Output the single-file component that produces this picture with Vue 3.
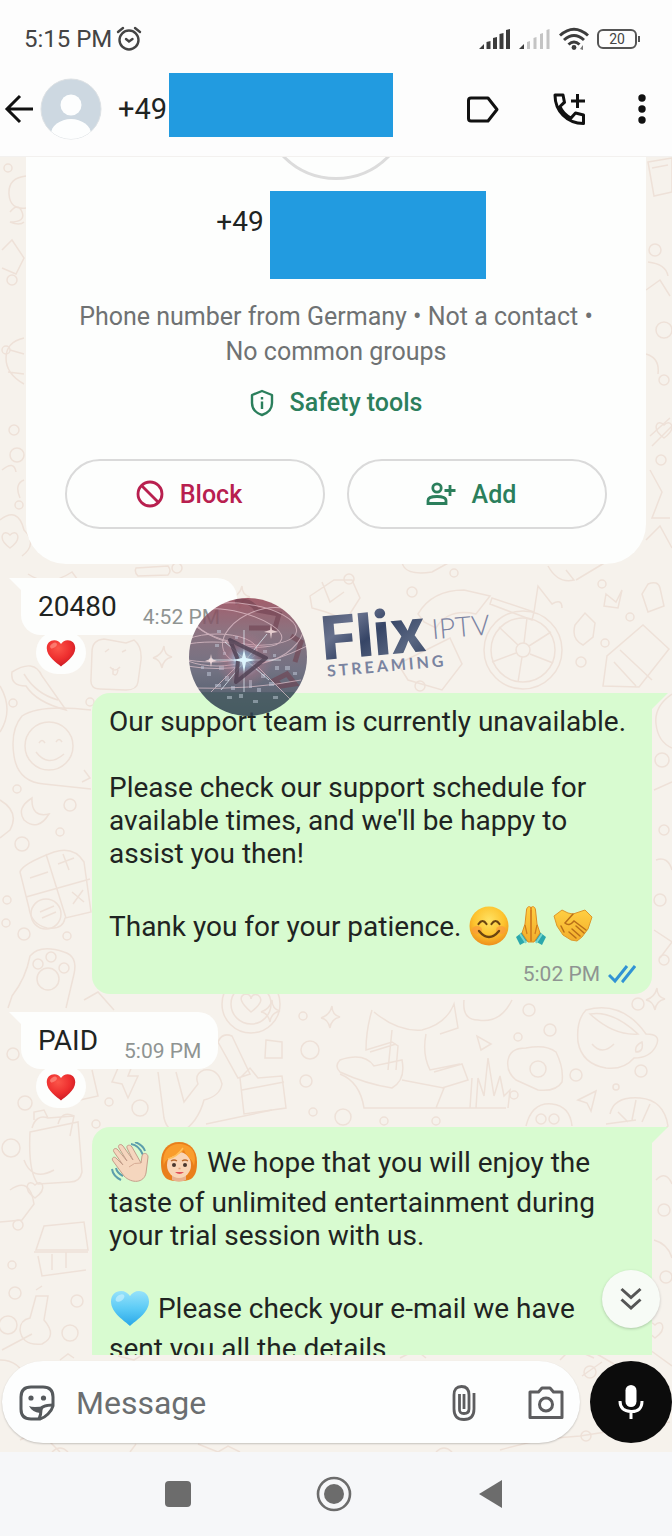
<script setup>
import { ref } from 'vue';

const draft = ref('');

const messages = [
  { id: 1, mine: false, text: '20480', time: '4:52 PM', reaction: true },
  {
    id: 2,
    mine: true,
    time: '5:02 PM',
    paragraphs: [
      ['Our support team is currently unavailable.'],
      ["Please check our support schedule for available times, and we'll be happy to assist you then!"],
      ['Thank you for your patience. ', { emoji: 'smile' }, { emoji: 'pray' }, { emoji: 'shake' }]
    ]
  },
  { id: 3, mine: false, text: 'PAID', time: '5:09 PM', reaction: true },
  {
    id: 4,
    mine: true,
    paragraphs: [
      [{ emoji: 'wave' }, ' ', { emoji: 'woman' }, ' We hope that you will enjoy the taste of unlimited entertainment during your trial session with us.'],
      [{ emoji: 'blueheart' }, ' Please check your e-mail we have sent you all the details']
    ]
  }
];

// small circles scattered over the wallpaper: x, y, radius
const dots = [
  [8, 168, 4], [12, 280, 5], [14, 430, 5], [17, 455, 7], [19, 505, 4], [6, 350, 4],
  [655, 250, 6], [661, 460, 5], [664, 330, 8], [664, 380, 5],
  [103, 587, 5], [177, 568, 5], [349, 579, 5], [412, 592, 5], [454, 573, 4], [602, 584, 4],
  [630, 617, 4], [605, 643, 4], [581, 662, 5], [420, 686, 5], [13, 703, 4], [156, 700, 4], [90, 702, 4],
  [17, 789, 4], [70, 805, 6], [60, 832, 4], [22, 844, 7], [7, 900, 4], [6, 923, 4], [24, 934, 6], [67, 936, 4],
  [662, 760, 7], [664, 830, 5], [660, 900, 6], [664, 960, 5],
  [13, 1054, 6], [25, 1103, 7], [11, 1148, 9], [96, 1124, 4], [109, 1102, 4], [140, 1108, 8], [306, 1081, 6],
  [303, 1016, 4], [310, 1050, 9], [313, 1112, 4], [529, 1010, 6], [550, 1030, 6], [518, 1037, 4], [576, 1075, 6],
  [641, 1071, 6], [616, 1087, 3], [514, 1095, 4], [343, 1117, 8], [384, 1121, 4], [436, 1121, 4], [638, 1004, 6],
  [12, 1265, 4], [15, 1293, 6], [77, 1301, 6], [70, 1333, 8], [8, 1325, 9], [666, 1277, 6], [18, 1225, 5],
  [664, 1210, 6], [590, 1372, 6], [586, 1436, 5]
];

const hearts = [[655, 1330], [35, 1190], [664, 430], [10, 540]];
const stars = [[162, 658], [240, 598], [330, 1018], [20, 1385], [655, 1000], [270, 1012]];
</script>

<template>
  <div class="screen">
    <!-- shared emoji drawings -->
    <svg class="sprite" aria-hidden="true">
      <defs>
        <radialGradient id="gYellow" cx="0.5" cy="0.35" r="0.65">
          <stop offset="0" stop-color="#ffe264" />
          <stop offset="0.6" stop-color="#fdc32d" />
          <stop offset="1" stop-color="#ee8f1c" />
        </radialGradient>
        <linearGradient id="gHand" x1="0" y1="0" x2="0" y2="1">
          <stop offset="0" stop-color="#ffcf42" />
          <stop offset="1" stop-color="#f3ae2b" />
        </linearGradient>
        <radialGradient id="gRed" cx="0.4" cy="0.3" r="0.7">
          <stop offset="0" stop-color="#fb5549" />
          <stop offset="0.6" stop-color="#ee2f2f" />
          <stop offset="1" stop-color="#cb1c25" />
        </radialGradient>
        <linearGradient id="gBlue" x1="0" y1="0" x2="0" y2="1">
          <stop offset="0" stop-color="#97e2fa" />
          <stop offset="0.5" stop-color="#5ccbf6" />
          <stop offset="1" stop-color="#29a7e8" />
        </linearGradient>
        <symbol id="heart" viewBox="0 0 40 40">
          <path d="M20 38C15 33 1 25 1 13.500C1 7 5.500 3 11 3c4 0 7 2 9 5 2-3 5-5 9-5 5.500 0 10 4 10 10.500C39 25 25 33 20 38z" />
        </symbol>
        <symbol id="smile" viewBox="0 0 40 40">
          <circle cx="20" cy="20" r="19.500" fill="url(#gYellow)" />
          <ellipse cx="8" cy="24" rx="5" ry="4" fill="#fb9a3c" opacity="0.7" />
          <ellipse cx="32" cy="24" rx="5" ry="4" fill="#fb9a3c" opacity="0.7" />
          <path d="M9.500 18q4-6 8 0M22.500 18q4-6 8 0" fill="none" stroke="#6b4410" stroke-width="2.200" stroke-linecap="round" />
          <path d="M10 25q10 12 20 0" fill="none" stroke="#6b4410" stroke-width="2.400" stroke-linecap="round" />
        </symbol>
        <symbol id="pray" viewBox="0 0 40 40">
          <path d="M14 24L5 31l4 8 9-5zM26 24l9 7-4 8-9-5z" fill="#2ba8ac" />
          <path d="M9 28l6 9M31 28l-6 9" stroke="#78d6cf" stroke-width="2" />
          <path d="M19.500 1c-2-1-3.500 0-4 3L14 18l-3 9 6 9h3zM20.500 1c2-1 3.500 0 4 3L26 18l3 9-6 9h-3z" fill="url(#gHand)" stroke="#df8d22" stroke-width="1" />
          <path d="M20 4v31M14 19l2 9M26 19l-2 9" stroke="#cf7b1b" stroke-width="1.200" fill="none" />
        </symbol>
        <symbol id="shake" viewBox="0 0 40 40">
          <path d="M1 10L9 4l6 3 5 1 6-2 6-2 7 7-4 12-6 8-5 4-6-1-8-5-6-9z" fill="url(#gHand)" stroke="#dd982b" stroke-width="1" stroke-linejoin="round" />
          <path d="M20 8l-8 9q4 4 9-2l12 9M23 20l8 7M19 23l8 7M16 26l7 6M8 20l3 6" fill="none" stroke="#b96f18" stroke-width="1.500" stroke-linecap="round" />
        </symbol>
        <symbol id="wave" viewBox="0 0 40 40">
          <path d="M21 2q8 1 12 11M25 0q8 3 10 9M2 27q1 7 9 11M6 26q1 5 7 8" fill="none" stroke="#5d9eac" stroke-width="2" />
          <path d="M14 34L3 19c-2-3 1-5 3-3l7 7L4 10c-2-3 2-5 4-2l9 11L9 6c-2-3 2-5 4-2l10 14-6-12c-1-3 3-4 5-1l9 16 1-7c1-4 6-3 6 1l-2 16c-2 10-14 11-22 3z" fill="#f5d6be" stroke="#c59e8b" stroke-width="1" />
          <path d="M19 25q5-5 12-4" fill="none" stroke="#d7ac95" />
        </symbol>
        <symbol id="woman" viewBox="0 0 40 40">
          <path d="M20 0C9 0 2 8 2 20c0 8 1 13 6 17 6 3 18 3 24 0 5-4 6-9 6-17C38 8 31 0 20 0z" fill="#e97f1b" />
          <path d="M13 30h14v8q-7 3-14 0z" fill="#e9b18f" />
          <ellipse cx="20" cy="23" rx="12" ry="13" fill="#f9d5b6" />
          <path d="M5 24C6 14 17 16 25 8c2 7 8 8 10 16 4-16-5-22-15-22S2 10 5 24z" fill="#f99d2c" />
          <path d="M9 17Q18 15 24 6" fill="none" stroke="#ffc15b" stroke-width="1.500" />
          <circle cx="15" cy="23" r="2" fill="#49372f" />
          <circle cx="26" cy="23" r="2" fill="#49372f" />
          <path d="M12 19q3-2 6 0M23 19q3-2 6 0" fill="none" stroke="#b86930" stroke-width="1.300" />
          <path d="M16 30q4.500 4 9 0z" fill="#e2525a" />
          <path d="M19.500 26.500h2" stroke="#dda27a" stroke-width="1.500" />
        </symbol>
        <symbol id="blueheart" viewBox="0 0 40 40">
          <use href="#heart" fill="url(#gBlue)" />
          <ellipse cx="10" cy="10" rx="5" ry="3" fill="#d0f4ff" opacity="0.6" transform="rotate(-35 10 10)" />
        </symbol>
        <symbol id="redheart" viewBox="0 0 40 40">
          <use href="#heart" fill="url(#gRed)" />
          <ellipse cx="10" cy="10" rx="5" ry="3" fill="#ff9c90" opacity="0.6" transform="rotate(-35 10 10)" />
        </symbol>
      </defs>
    </svg>

    <header class="top">
      <div class="status">
        <span class="clock">5:15 PM</span>
        <svg class="alarm" width="26" height="26" viewBox="0 0 26 26" fill="none" stroke="#444" stroke-width="2.400" stroke-linecap="round">
          <circle cx="13" cy="14" r="9.500" />
          <path d="M10 13l3 2.500 3.500-2.500M2 6l5-4M24 6l-5-4" />
        </svg>
        <div class="status-icons">
          <svg width="32" height="22" viewBox="0 0 32 22" fill="#3c3c3c">
            <path d="M0 21l5-5v5zM7.500 14l4-1v8h-4zM14 10l4-1v12h-4zM20.500 6l4-1v16h-4zM27 2l4-1v20h-4z" />
          </svg>
          <svg width="32" height="22" viewBox="0 0 32 22" fill="#c4c4c4">
            <path d="M0 21l5-5v5z" fill="#3c3c3c" />
            <path d="M8 14l3-1v8H8zM14.500 10l3-1v12h-3zM21 6l3-1v16h-3zM27.500 2l3-1v20h-3z" />
          </svg>
          <svg width="30" height="24" viewBox="0 0 30 24" fill="none" stroke="#3c3c3c" stroke-width="3">
            <path d="M1 8.500Q15-4 29 8.500M5 13q10-9 20 0M9.500 17.500q5.500-5 11 0" />
            <circle cx="15" cy="20.500" r="2.400" fill="#3c3c3c" stroke="none" />
            <path d="M21 22l3-4v5z" fill="#777" stroke="none" />
          </svg>
          <div class="battery">20</div>
        </div>
      </div>

      <div class="app-bar">
        <button class="icon-btn back" aria-label="Back">
          <svg width="30" height="30" viewBox="0 0 30 30" fill="none" stroke="#111" stroke-width="3">
            <path d="M29 15H3M16 2L3 15l13 13" />
          </svg>
        </button>
        <svg class="avatar" width="62" height="62" viewBox="0 0 62 62">
          <clipPath id="avatarClip"><circle cx="31" cy="31" r="30" /></clipPath>
          <circle cx="31" cy="31" r="30" fill="#cdd8e1" stroke="#dde1e4" />
          <g clip-path="url(#avatarClip)" fill="#fdfefe">
            <circle cx="31" cy="27" r="10.500" />
            <ellipse cx="31" cy="56" rx="20" ry="15" />
          </g>
        </svg>
        <h1 class="name">+49</h1>
        <div class="redacted"></div>
        <div class="actions">
          <button class="icon-btn" aria-label="Label chat">
            <svg width="34" height="34" viewBox="0 0 34 34" fill="none" stroke="#111" stroke-width="3" stroke-linejoin="round">
              <path d="M5 6h17L31 17.500 22 29H5q-2.500 0-2.500-2.500v-18Q2.500 6 5 6z" />
            </svg>
          </button>
          <button class="icon-btn" aria-label="Call">
            <svg width="34" height="34" viewBox="0 0 34 34" fill="none" stroke="#111" stroke-width="3" stroke-linejoin="round">
              <path d="M3 3h8l1.500 7.500-4.500 4Q11 22 19 26l4.500-5 8 2v8.500C15 31.500 3 19 3 3zM12 10.500L8 14.500M19 26l4.500-5" />
              <path d="M25.500 2v14M19 9h14" />
            </svg>
          </button>
          <button class="icon-btn more" aria-label="More options">
            <svg width="10" height="30" viewBox="0 0 10 30" fill="#111">
              <circle cx="5" cy="4" r="3.700" /><circle cx="5" cy="15" r="3.700" /><circle cx="5" cy="26" r="3.700" />
            </svg>
          </button>
        </div>
      </div>
    </header>

    <main class="chat">
      <svg class="wallpaper" viewBox="0 157 672 1295" preserveAspectRatio="xMidYMin slice" fill="none" stroke="#eee1d8" stroke-width="1.500" aria-hidden="true">
        <circle v-for="(d, i) in dots" :key="'d' + i" :cx="d[0]" :cy="d[1]" :r="d[2]" />
        <path v-for="(h, i) in hearts" :key="'h' + i" :transform="`translate(${h[0]} ${h[1]})`" d="M0 8C-14-2-6-12 0-5 6-12 14-2 0 8z" />
        <path v-for="(s, i) in stars" :key="'s' + i" :transform="`translate(${s[0]} ${s[1]})`" d="M2-12q0 9 8 11-9 2-10 11-2-9-9-10 9-3 11-12z" />
        <!-- left edge beside the card -->
        <path d="M26 176q-18 2-17 18t17 14M10 212q8-10 12 0t-12 10q10 4 14 0M2 250l10-10 12 18-8 16-14-6M24 338q-18 4-18 20t18 26M10 350l14 4M8 372l16 2M2 470q12-10 14 2M0 520q18-14 24 10 14 14-2 26M24 480q-10 4-4 18" />
        <!-- right edge beside the card -->
        <path d="M648 162l24-4v34l-18 4zM652 168l16-3M648 262q18 2 20 14M646 290l14-10 10 16M650 436l20-18M652 446l20-20M646 354q14 4 12 20M650 470l12 22-10 26h18M646 540l14-14 12 22" />
        <!-- row above the first outgoing bubble -->
        <path d="M136 568l32-2q4 5 0 9l-30 1q-4-4-2-8zM28 574q20 14 44-2 16 20 8 28M92 652q0-12 12-13l22 4 8-3q8 6 7 20l-3 22q-1 8-12 8l-26-1q-10 0-9-10zM105 652l4-3M122 652l4-2M110 667q5 6 10 0M113 668v6q4 3 5-4M12 672q22-14 30 4l24 34q-30-8-40-24-16 0-14-14zM24 674q12 20 34 26M0 686q14 24 0 46" />
        <path d="M310 596l24-16h18l8 18-14 22-20-8-14-4zM322 582l8 20 14-10M402 562q2 14 30 10l18-10M418 614q14-24 46-24l26 6-14 18q-28-6-40 14l-12-6zM492 598l42 14-2 8-42-16zM534 612l4-26 14 18q10-6 10 4M548 566q10 18 26 14l-8-10M576 580l30-18M606 594l10 8 6-12-4 18-14-2zM648 584q10-4 12 4l4 18-16 6-6-18z" />
        <circle cx="523" cy="650" r="39" /><circle cx="523" cy="650" r="32" /><circle cx="523" cy="650" r="7" />
        <path d="M518 645l-19-18M529 646l22-14M516 653l-24 9M530 654l23 9M522 657l-4 25M524 643l3-25M575 625l10-12 10 10-2 14-10 8q-12-6-8-20zM603 686l4-30 36-31 26 24-30 38zM614 662l22 24M620 650l32 30M398 664l52-26 12 26-20 26-34-10z" />
        <!-- left column beside the first outgoing bubble -->
        <path d="M91 710Q40 704 22 716 10 730 14 756q4 26 30 28l47 5" />
        <circle cx="49" cy="746" r="24" />
        <path d="M39 743q3-5 6 0M56 742q3-5 6 0M36 752q12 16 28 2M84 770l6 8-8 4M32 798q-16 10-8 22 14 12 25-6-18 4-17-16zM0 800q20 12 10 30L0 838" />
        <path d="M20 872q2-8 34-20 20-6 30 10l7 50-26 6q-2 12-18 10-16-4-18-20zM46 854l20 64M26 897l64-18M30 878l18-6M58 864l16-6M63 854l6 16M72 892l12 10M83 890l-10 14" />
        <circle cx="46" cy="914" r="15" />
        <path d="M40 912l14-6M42 918l14-6M8 1008l4-12q14-18 18-40 10-12 34-4 14 4 10 22l-8 34M84 1000l14-8 16 18" />
        <circle cx="38" cy="964" r="5" /><circle cx="51" cy="957" r="5" /><circle cx="64" cy="968" r="5" /><circle cx="48" cy="979" r="11" />
        <!-- right column -->
        <path d="M672 694q-18 12-16 30t16 24M654 790l18-8M656 860q12-4 16 10M654 930l18 12-12 16M656 1180q10-10 16 4M654 1240q14 4 18 18" />
        <!-- band between the two outgoing bubbles -->
        <circle cx="251" cy="1004" r="29" /><circle cx="251" cy="1004" r="20" />
        <path d="M251 1012q-16-14-6-18 6 0 6 5 1-6 7-4 8 6-7 17zM266 1040l16 2v16h-17zM218 1042q4-10 14-6l18 38-12 4zM240 1078l10-10 8 10 24-2 4 32-42 6zM242 1090l42-8M158 1072l6 46q4 16 18 14 16-10 22-32 16-4 18-16-4-16-18-14-10 4-6 14l-14 18-8-30M118 1068l-6 14 10 2 6 14 10-22h-10l4-10" />
        <path d="M92 1070l6 26-18 4M206 1124l66-14M372 1010q-6 20-6 40l26-8 6 4-2 24M370 1052l26-8M374 1012q24 20 48 18 24-6 32-26l4 24-18 6M392 1030l-4 40M426 1034q-4 20 4 36l30-6M434 1072l28-8 6 16-26 8M340 1060q24-8 34 6l28-6q4 20-10 28-26-4-52-16-6-6 0-12zM340 1074q20 8 24 34h142M402 1080l42 8-8 20M470 1108l2-30M476 1108l2-30 6 18 4-38 6 38 6-20 4 20 6-6-2 18" />
        <path d="M464 1000q-2 20 14 20 22 4 34-20M508 1060q2-12 18-12 20-4 30 4 8 16 6 30-6 10-24 8l-22-10q-10-8-8-20z" /><circle cx="538" cy="1069" r="8" />
        <path d="M586 1010q36-10 60 24 16 0 10 12-6 12-22 12-10 12-28 10-24-4-28-26-2-22 8-32zM590 1014q22-4 48 20-24 2-48-20zM592 1044q10 12 22 0M642 1042q-8 4-6 10 8 0 6-10zM477 1036l4 14 10-6zM578 1100l18-9-5 20-4-8z" />
        <path d="M526 1126q6-24 26-22 18 2 20 22M610 1114q4-18 30-16 24 2 28 28l-12 10M606 1124l30-4M618 1112l10 10M636 1100l-4 20M650 1104l-8 18" />
        <circle cx="541" cy="1119" r="5" /><circle cx="554" cy="1119" r="5" />
        <!-- left column beside the second outgoing bubble -->
        <path d="M30 1132l48-10 4 50q-2 10-12 10l-32 2q-10-12-8-52zM32 1128q4-14 16-10l26-2M34 1120v-8l10-2 4 8M58 1124q4-14 16-8l-4 20M24 1160q8 22 30 10M10 1190q20-14 24 14l-12 16-22 2" />
        <path d="M36 1250l8-24 40-4 4 28zM34 1252h54M38 1256l4 20 44-6M52 1254v16M66 1252v16M36 1290l6-4" />
        <path d="M36 1296h12l-4 24q14 16-2 24-20 2-22-14 0-10 10-12zM2 1350l30-16M0 1360q20 0 26 20l-12 20" />
        <!-- strip around the composer -->
        <path d="M60 1360l8-6 6 4M118 1356l16 4 10-6M400 1358l16-8 10 8M560 1360l12-12 22 10M582 1376l20-14M500 1450q40-12 80-14l90-14M590 1350l24 14M650 1350l22 16M20 1440l18-10 22 22M52 1452q8-8 16 0M130 1452l6-8M198 1444l20 8 10-6 12 6M436 1452q8-8 16 0" />
      </svg>

      <div class="messages">
        <section class="card">
          <div class="photo"></div>
          <div class="card-number">
            <h2>+49</h2>
            <div class="redacted tall"></div>
          </div>
          <p class="info">Phone number from Germany • Not a contact • No common groups</p>
          <button class="safety">
            <svg width="24" height="28" viewBox="0 0 24 28" fill="none" stroke="currentColor" stroke-width="2.400" stroke-linejoin="round">
              <path d="M12 2l10 4v8c0 6-4 10-10 12C6 24 2 20 2 14V6z" />
              <path d="M12 12.500V20M12 8v2.500" />
            </svg>
            Safety tools
          </button>
          <div class="card-actions">
            <button class="pill block">
              <svg width="28" height="28" viewBox="0 0 28 28" fill="none" stroke="currentColor" stroke-width="2.800">
                <circle cx="14" cy="14" r="12" /><path d="M5.500 5.500l17 17" />
              </svg>
              Block
            </button>
            <button class="pill add">
              <svg width="30" height="24" viewBox="0 0 30 24" fill="none" stroke="currentColor" stroke-width="2.800">
                <circle cx="11" cy="6" r="4.200" />
                <path d="M2 21.500v-3q0-4 9-4t9 4v3zM24 3v11M18.500 8.500h11" />
              </svg>
              Add
            </button>
          </div>
        </section>

        <template v-for="m in messages" :key="m.id">
          <article v-if="m.mine" class="bubble out">
            <p v-for="(p, i) in m.paragraphs" :key="i">
              <template v-for="(part, j) in p" :key="j">
                <svg v-if="part.emoji" class="emoji" width="40" height="40"><use :href="'#' + part.emoji" /></svg>
                <template v-else>{{ part }}</template>
              </template>
            </p>
            <div v-if="m.time" class="meta">
              <time>{{ m.time }}</time>
              <svg width="28" height="20" viewBox="0 0 28 20" fill="none" stroke="#3193d4" stroke-width="3">
                <path d="M1 11l6 6L19 2M14 16l1 1L27 2" />
              </svg>
            </div>
          </article>
          <article v-else class="bubble in">
            <span>{{ m.text }}</span>
            <time>{{ m.time }}</time>
            <div v-if="m.reaction" class="reaction">
              <svg width="32" height="30"><use href="#redheart" /></svg>
            </div>
          </article>
        </template>

        <svg class="watermark" width="340" height="124" viewBox="0 0 340 124">
          <defs>
            <linearGradient id="gBall" x1="0" y1="0" x2="0" y2="1">
              <stop offset="0" stop-color="#974656" />
              <stop offset="0.3" stop-color="#7c6070" />
              <stop offset="0.6" stop-color="#5f5f73" />
              <stop offset="1" stop-color="#314254" />
            </linearGradient>
            <radialGradient id="gGlow">
              <stop offset="0" stop-color="#e9fbff" />
              <stop offset="0.25" stop-color="#8fc3ea" stop-opacity="0.8" />
              <stop offset="0.6" stop-color="#c0637a" stop-opacity="0.3" />
              <stop offset="1" stop-color="#c0637a" stop-opacity="0" />
            </radialGradient>
            <linearGradient id="gFlix" x1="0" y1="0" x2="1" y2="1">
              <stop offset="0" stop-color="#46516c" />
              <stop offset="0.3" stop-color="#66708c" />
              <stop offset="0.5" stop-color="#364566" />
              <stop offset="0.75" stop-color="#596681" />
              <stop offset="1" stop-color="#2f4062" />
            </linearGradient>
            <clipPath id="ballClip"><circle cx="61" cy="61" r="59" /></clipPath>
          </defs>
          <g clip-path="url(#ballClip)" opacity="0.87">
            <rect width="122" height="122" fill="url(#gBall)" />
            <path d="M0 96h122v26H0z" fill="#304350" opacity="0.7" />
            <g fill="none" stroke="#5b2638" stroke-width="5" opacity="0.6">
              <path d="M48 6q14-4 22 8l22 4-4 14H62M104 40l10 6-6 20M88 84l12-6 8 10-14 2z" />
            </g>
            <g fill="none" stroke="#ecc8d3" stroke-width="1" opacity="0.65">
              <ellipse cx="58" cy="28" rx="52" ry="20" transform="rotate(8 58 28)" />
              <ellipse cx="50" cy="32" rx="46" ry="16" transform="rotate(14 50 32)" />
              <ellipse cx="30" cy="54" rx="40" ry="16" />
              <ellipse cx="25" cy="56" rx="40" ry="10" />
              <ellipse cx="76" cy="40" rx="42" ry="26" transform="rotate(-20 76 40)" />
              <path d="M0 70q60 10 120-20M24 96L60 60l50 50M4 92q60 2 110-8" />
            </g>
            <g fill="#bdc6d9" opacity="0.5">
              <path d="M22 62h4v4h-4zM32 70h5v4h-5zM20 76h4v4h-4zM38 80h4v5h-4zM28 88h6v3h-6zM74 78h4v4h-4zM82 86h5v4h-5zM70 92h4v4h-4zM98 70h5v4h-5zM86 58h3v3h-3zM44 90h4v4h-4zM62 84h3v8h-3zM14 70h3v3h-3zM106 76h4v3h-4zM40 100h5v3h-5zM66 104h5v3h-5zM86 100h5v3h-5zM28 48h4v3h-4zM36 56h3v3h-3zM88 70h4v4h-4zM48 40h3v3h-3zM30 34h4v3h-4zM76 54h4v3h-4zM52 98h4v4h-4z" />
            </g>
            <circle cx="57" cy="64" r="29" fill="url(#gGlow)" />
            <path d="M57 34v62M22 64h72M38 46l44 38M80 38L34 94" stroke="#e5f6ff" stroke-width="1" opacity="0.7" />
            <path d="M43 44l36 18-30 24 2-22z" fill="#43324a" fill-opacity="0.4" stroke="#39283e" stroke-width="4" stroke-linejoin="round" opacity="0.85" />
            <path d="M57 54l2 8 9 2-9 2-2 10-2-10-9-2 9-2z" fill="#d9f5ff" />
            <path d="M84 28l1 6 6 2-6 1-1 6-1-6-6-1 6-2zM24 58l1 5 5 2-5 1-1 5-1-5-5-1 5-2z" fill="#ffe3e4" opacity="0.8" />
          </g>
          <g transform="rotate(-5 136 64)">
            <text class="flix" x="136" y="64" fill="url(#gFlix)">Flix</text>
            <text class="iptv" x="247" y="53">IPTV</text>
            <text class="streaming" x="139" y="81">STREAMING</text>
          </g>
        </svg>
      </div>

      <button class="jump" aria-label="Scroll to latest">
        <svg width="22" height="24" viewBox="0 0 22 24" fill="none" stroke="#555" stroke-width="3">
          <path d="M1.500 2l9.500 8.500L20.500 2M1.500 12.500L11 21l9.500-8.500" />
        </svg>
      </button>

      <form class="composer" @submit.prevent>
        <div class="field">
          <button type="button" class="icon-btn" aria-label="Stickers">
            <svg width="36" height="36" viewBox="0 0 36 36" fill="none" stroke="#55595c" stroke-width="3" stroke-linejoin="round">
              <path d="M12 2h12q10 0 10 10v9q-1 4-5 8t-8 5h-9Q2 34 2 24V12Q2 2 12 2z" />
              <path d="M34 20q-12 0-12 5 0 5-2 9" />
              <path d="M10 21q4 2 16 0-4 3-5 7-8-1-11-7z" fill="#55595c" stroke="none" />
              <circle cx="12" cy="13" r="2.600" fill="#55595c" stroke="none" /><circle cx="24.500" cy="13" r="2.600" fill="#55595c" stroke="none" />
            </svg>
          </button>
          <input v-model="draft" type="text" placeholder="Message" aria-label="Message" />
          <button type="button" class="icon-btn" aria-label="Attach">
            <svg width="24" height="36" viewBox="0 0 24 36" fill="none" stroke="#5d5d5f" stroke-width="2.800">
              <path d="M22 8v16q0 10.500-10 10.500T2 24V10q0-8.500 7.500-8.500T17 10v14q0 4.500-5 4.500T7.500 24V9M12 9v15" />
            </svg>
          </button>
          <button type="button" class="icon-btn" aria-label="Camera">
            <svg width="36" height="34" viewBox="0 0 36 34" fill="none" stroke="#5d5d5f" stroke-width="3" stroke-linejoin="round">
              <path d="M2 6h8.500L14 2h8l3.500 4H34v25.500H2z" /><circle cx="18" cy="18.500" r="6.500" />
            </svg>
          </button>
        </div>
        <button type="button" class="mic" aria-label="Record voice message">
          <svg width="26" height="36" viewBox="0 0 26 36" fill="none" stroke="#fff" stroke-width="3">
            <rect x="7.500" y="1" width="11" height="22" rx="5.500" fill="#fff" stroke="none" />
            <path d="M2 17q0 10 11 10.500T24 17M13 27v8" />
          </svg>
        </button>
      </form>
    </main>

    <nav class="nav">
      <button aria-label="Recent apps">
        <svg width="36" height="36" viewBox="0 0 36 36"><rect x="5" y="5" width="26" height="26" rx="4" fill="#6c6c6c" /></svg>
      </button>
      <button aria-label="Home">
        <svg width="36" height="36" viewBox="0 0 36 36"><circle cx="18" cy="18" r="16" fill="none" stroke="#6c6c6c" stroke-width="2.600" /><circle cx="18" cy="18" r="10" fill="#6c6c6c" /></svg>
      </button>
      <button aria-label="Back to previous app">
        <svg width="36" height="36" viewBox="0 0 36 36"><path d="M30 4v28L7 18z" fill="#6c6c6c" /></svg>
      </button>
    </nav>
  </div>
</template>

<style>
body {
  margin: 0;
}
</style>

<style scoped>
.screen {
  display: flex;
  flex-direction: column;
  height: 100vh;
  overflow: hidden;
  background: #fdfdfd;
  color: #1f2422;
  font-family: Roboto, "Liberation Sans", sans-serif;
}

.sprite {
  position: absolute;
  width: 0;
  height: 0;
}

svg {
  display: block;
  flex: none;
}

button {
  display: flex;
  align-items: center;
  justify-content: center;
  padding: 0;
  border: 0;
  background: none;
  font-family: inherit;
  cursor: pointer;
}

h1,
h2,
p {
  margin: 0;
  font-weight: 400;
}

.top {
  flex: none;
  border-bottom: 1px solid #f3f1ef;
}

.status {
  display: flex;
  align-items: center;
  height: 72px;
  padding: 6px 35px 0 24px;
  box-sizing: border-box;
}

.clock {
  font-size: 24px;
  line-height: 32px;
  color: #444;
}

.alarm {
  margin-left: 4px;
}

.status-icons {
  display: flex;
  align-items: center;
  gap: 8px;
  margin-left: auto;
}

.battery {
  position: relative;
  width: 36px;
  height: 16px;
  border: 2px solid #555;
  border-radius: 6px;
  font-size: 14px;
  line-height: 16px;
  text-align: center;
  color: #444;
}

.battery::after {
  content: '';
  position: absolute;
  right: -5px;
  top: 5px;
  width: 2px;
  height: 6px;
  background: #555;
}

.app-bar {
  display: flex;
  align-items: center;
  height: 84px;
  padding: 0 20px 10px 4px;
  box-sizing: border-box;
}

.avatar {
  margin: 0 16px 0 6px;
}

.name {
  font-size: 29px;
  line-height: 36px;
  margin-right: 2px;
}

.redacted {
  flex: 0 1 224px;
  height: 64px;
  margin-bottom: 8px;
  background: #229be0;
}

.redacted.tall {
  flex-basis: 216px;
  height: 88px;
  margin: 0;
}

.actions {
  display: flex;
  align-items: center;
  gap: 52px;
  margin-left: auto;
}

.more {
  width: 20px;
  margin-left: -6px;
}

.chat {
  position: relative;
  flex: 1;
  min-height: 0;
  display: flex;
  flex-direction: column;
  background: #f6f2ec;
}

.wallpaper {
  position: absolute;
  inset: 0;
  width: 100%;
  height: 100%;
}

.messages {
  position: relative;
  flex: 1;
  min-height: 0;
  display: flex;
  flex-direction: column;
  overflow: hidden;
}

.card {
  flex: none;
  display: flex;
  flex-direction: column;
  align-items: center;
  margin: 0 26px 14px;
  padding: 0 39px 35px;
  border-radius: 0 0 40px 40px;
  background: #fdfefd;
}

.photo {
  width: 150px;
  height: 150px;
  margin-top: -127px;
  box-sizing: border-box;
  border: 3px solid #dcdcdc;
  border-radius: 50%;
}

.card-number {
  display: flex;
  gap: 6px;
  align-self: stretch;
  justify-content: center;
  margin-top: 11px;
  padding-left: 30px;
}

.card-number h2 {
  font-size: 28px;
  line-height: 62px;
}

.info {
  margin-top: 20px;
  font-size: 25px;
  line-height: 35px;
  text-align: center;
  color: #6f7273;
}

.safety {
  gap: 16px;
  margin-top: 16px;
  font-size: 25px;
  line-height: 36px;
  font-weight: 500;
  color: #2b7f5c;
}

.card-actions {
  display: flex;
  gap: 22px;
  align-self: stretch;
  margin-top: 38px;
}

.pill {
  flex: 1;
  gap: 16px;
  height: 70px;
  padding-right: 12px;
  border: 2px solid #dadada;
  border-radius: 35px;
  font-size: 25px;
  font-weight: 500;
}

.block {
  color: #b8204f;
}

.add {
  color: #2b7f5c;
}

.bubble {
  position: relative;
  flex: none;
  font-size: 28px;
  line-height: 33px;
}

.bubble::before {
  content: '';
  position: absolute;
  top: 0;
  width: 16px;
  height: 16px;
}

.in {
  align-self: flex-start;
  display: flex;
  align-items: flex-end;
  gap: 26px;
  margin: 0 0 58px 21px;
  padding: 12px 17px 4px;
  border-radius: 0 20px 20px 20px;
  background: #fdfefd;
}

.in span {
  padding-bottom: 8px;
}

.in::before {
  left: -12px;
  background: #fdfefd;
  clip-path: polygon(0 0, 100% 0, 100% 100%);
}

.out {
  margin: 0 20px 18px 92px;
  padding: 12px 22px 6px 17px;
  border-radius: 18px 0 18px 18px;
  background: #d8fbd0;
}

.out::before {
  right: -16px;
  background: #d8fbd0;
  clip-path: polygon(0 0, 100% 0, 0 100%);
}

.out p + p {
  margin-top: 33px;
}

.emoji {
  display: inline-block;
  margin: 3px 1px 4px;
  vertical-align: -14px;
}

.bubble time {
  font-size: 21px;
  line-height: 28px;
  color: #8f9492;
}

.meta {
  display: flex;
  align-items: center;
  justify-content: flex-end;
  gap: 8px;
  margin: 10px -6px 0 0;
}

.reaction {
  position: absolute;
  left: 15px;
  top: 53px;
  display: flex;
  align-items: center;
  justify-content: center;
  width: 50px;
  height: 43px;
  border-radius: 22px;
  background: #fdfefd;
}

.watermark {
  position: absolute;
  left: 187px;
  top: 439px;
}

.flix {
  font-family: Inter, "Open Sans", sans-serif;
  font-size: 60px;
  font-weight: 800;
}

.iptv {
  font-family: Lato, sans-serif;
  font-size: 28px;
  font-weight: 300;
  fill: #7c84a3;
}

.streaming {
  font-family: Lato, sans-serif;
  font-size: 16px;
  font-weight: 700;
  letter-spacing: 3px;
  fill: #7a84a0;
}

.jump {
  position: absolute;
  right: 12px;
  bottom: 124px;
  width: 58px;
  height: 58px;
  border-radius: 50%;
  background: #f7fbf6;
  box-shadow: 0 1px 3px rgba(0, 0, 0, 0.2);
}

.composer {
  position: relative;
  flex: none;
  display: flex;
  align-items: center;
  gap: 10px;
  padding: 6px 0 9px 2px;
}

.field {
  flex: 1;
  min-width: 0;
  display: flex;
  align-items: center;
  height: 82px;
  padding: 2px 16px 0 17px;
  border-radius: 41px;
  box-sizing: border-box;
  background: #fdfefe;
  box-shadow: 0 1px 2px rgba(0, 0, 0, 0.2);
}

.field .icon-btn + .icon-btn {
  margin-left: 52px;
}

.field input {
  flex: 1;
  min-width: 0;
  margin: 0 0 0 21px;
  padding: 0;
  border: 0;
  outline: 0;
  background: none;
  font-family: inherit;
  font-size: 32px;
  line-height: 40px;
  color: #1f2422;
}

.field input::placeholder {
  color: #6b6e70;
  opacity: 1;
}

.mic {
  flex: none;
  width: 82px;
  height: 82px;
  border-radius: 50%;
  background: #0c0c0c;
}

.nav {
  flex: none;
  display: flex;
  justify-content: center;
  gap: 120px;
  height: 84px;
  padding-right: 5px;
  background: #f6f7f9;
}
</style>
